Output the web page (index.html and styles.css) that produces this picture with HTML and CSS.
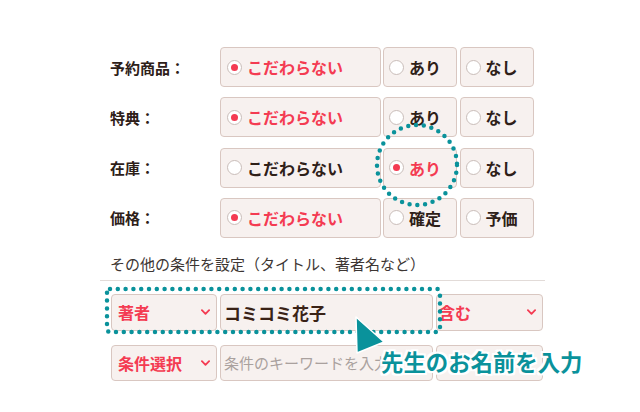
FILE: index.html
```html
<!DOCTYPE html>
<html>
    <head>
        <title>詳細検索</title>
        <link rel="stylesheet" href="styles.css">
    </head>
    <body>
        <div class="page">
            <div class="conditions">
                <div class="cond-row">
                    <div class="cond-label">予約商品：</div>
                    <label class="choice wide on"><span class="radio"></span>こだわらない</label>
                    <label class="choice"><span class="radio"></span>あり</label>
                    <label class="choice"><span class="radio"></span>なし</label>
                </div>
                <div class="cond-row">
                    <div class="cond-label">特典：</div>
                    <label class="choice wide on"><span class="radio"></span>こだわらない</label>
                    <label class="choice"><span class="radio"></span>あり</label>
                    <label class="choice"><span class="radio"></span>なし</label>
                </div>
                <div class="cond-row">
                    <div class="cond-label">在庫：</div>
                    <label class="choice wide"><span class="radio"></span>こだわらない</label>
                    <label class="choice on"><span class="radio"></span>あり</label>
                    <label class="choice"><span class="radio"></span>なし</label>
                </div>
                <div class="cond-row">
                    <div class="cond-label">価格：</div>
                    <label class="choice wide on"><span class="radio"></span>こだわらない</label>
                    <label class="choice"><span class="radio"></span>確定</label>
                    <label class="choice"><span class="radio"></span>予価</label>
                </div>
            </div>

            <div class="other">
                <h2 class="other-title">その他の条件を設定（タイトル、著者名など）</h2>
                <div class="kw-row">
                    <div class="select field-type">著者<svg class="chev" viewBox="0 0 10 6"><polyline points="1,1 5,5 9,1"/></svg></div>
                    <div class="keyword filled">コミコミ花子</div>
                    <div class="select field-match">含む<svg class="chev" viewBox="0 0 10 6"><polyline points="1,1 5,5 9,1"/></svg></div>
                </div>
                <div class="kw-row">
                    <div class="select field-type">条件選択<svg class="chev" viewBox="0 0 10 6"><polyline points="1,1 5,5 9,1"/></svg></div>
                    <div class="keyword placeholder">条件のキーワードを入力</div>
                    <div class="select field-match"></div>
                </div>
            </div>

            <!-- 説明用の注釈 -->
            <svg class="marks" width="640" height="412" viewBox="0 0 640 412">
                <circle class="dots" cx="417" cy="165" r="40"/>
                <rect class="dots" x="107" y="289" width="333" height="43" rx="3"/>
                <polygon class="arrow" points="356,317 384,342 357,353"/>
            </svg>
            <div class="hint">先生のお名前を入力</div>
        </div>
    </body>
</html>
```

FILE: styles.css
```css
body { margin: 0; background: #fff; font-family: "Noto Sans CJK JP", "Noto Sans", sans-serif; color: #2e2018; }
.page { position: relative; width: 640px; height: 412px; overflow: hidden; }

.conditions { display: flex; flex-direction: column; gap: 10.3px; padding: 47px 0 0 110px; }
.cond-row { display: flex; align-items: center; height: 40px; }
.cond-label { width: 110px; font-size: 15px; font-weight: bold; color: #2e2018; }
.choice { box-sizing: border-box; display: flex; align-items: center; gap: 5px; width: 74px; height: 40px; margin-right: 2.5px; padding-left: 5px; background: #f7f1ef; border: 1px solid #d9c7c1; border-radius: 4px; font-size: 16px; font-weight: bold; color: #2e2018; }
.choice.wide { width: 161px; padding-left: 6px; margin-right: 2px; }
.choice.on { color: #f43b52; }
.radio { box-sizing: border-box; position: relative; width: 15px; height: 15px; border: 1px solid #c9bdb9; border-radius: 50%; background: #fff; flex: none; }
.choice.on .radio::after { content: ""; position: absolute; left: 3px; top: 3px; width: 7px; height: 7px; border-radius: 50%; background: #f43b52; }

.other { width: 445px; margin: 16px 0 0 100px; }
.other-title { margin: 0; padding: 0 0 6px 10px; border-bottom: 1px solid #e2dbd8; font-size: 15px; font-weight: normal; line-height: 20px; color: #3d3633; }
.kw-row { display: flex; gap: 3px; height: 37px; margin-top: 13px; padding-left: 11px; }
.kw-row + .kw-row { margin-top: 14px; height: 36px; }
.select, .keyword { box-sizing: border-box; display: flex; align-items: center; height: 100%; background: #f7f1ef; border: 1px solid #d9c7c1; border-radius: 4px; }
.select { justify-content: space-between; padding: 0 6px 0 6px; font-size: 16px; font-weight: bold; color: #f43b52; }
.field-type { width: 106px; }
.field-match { width: 107px; padding-left: 2px; }
.keyword { width: 213px; padding-left: 3px; }
.keyword.filled { font-size: 17px; font-weight: bold; color: #3a2216; }
.keyword.placeholder { font-size: 15px; color: #aaa19e; }
.chev { width: 9px; height: 6px; fill: none; stroke: #f43b52; stroke-width: 2; stroke-linecap: round; stroke-linejoin: round; }

.marks { position: absolute; left: 0; top: 0; pointer-events: none; }
.dots { fill: none; stroke: #0a929b; stroke-width: 4.5; stroke-linecap: round; stroke-dasharray: 0 7.8; }
.arrow { fill: #0a929b; stroke: #fff; stroke-width: 1.5; stroke-linejoin: round; }
.hint { position: absolute; left: 381px; top: 350px; font-size: 22.4px; line-height: 23px; font-weight: bold; color: #0a929b; text-shadow: 2px 0 #fff, -2px 0 #fff, 0 2px #fff, 0 -2px #fff, 2px 2px #fff, -2px -2px #fff, 2px -2px #fff, -2px 2px #fff; }
```
